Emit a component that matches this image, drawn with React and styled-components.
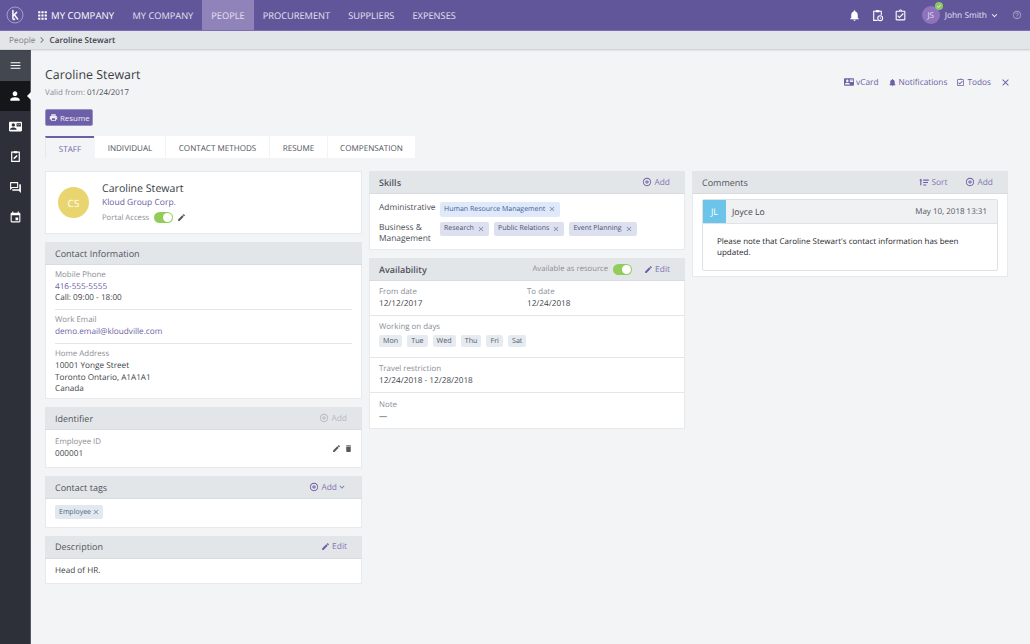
import React from "react";
import styled, { createGlobalStyle } from "styled-components";
import {
  MdApps, MdNotifications, MdOutlineAssignmentTurnedIn, MdKeyboardArrowDown, MdMenu, MdPerson,
  MdContactMail, MdOutlineForum, MdEvent, MdPrint, MdEdit, MdDelete, MdClose, MdAddCircleOutline,
  MdHelpOutline, MdChevronRight, MdCheck,
} from "react-icons/md";

const Global = createGlobalStyle`
  html, body { margin: 0; padding: 0; height: 100%; }
  body { font-family: "Open Sans", "Liberation Sans", sans-serif; background: #f3f4f6; color: #3c3f46; overflow: hidden; text-rendering: geometricPrecision; }
  * { box-sizing: border-box; }
`;
const Page = styled.div`width: 1030px; height: 644px; display: flex; flex-direction: column; overflow: hidden;`;
const Top = styled.header`height: 31px; flex: none; background: #62569b; border-bottom: 1px solid #7a6fb0; display: flex; align-items: stretch; color: #fff; font-size: 9.25px;`;
const Logo = styled.svg`width: 18px; height: 18px; margin: 6px 0 0 6px; flex: none;`;
const Brand = styled.div`display: flex; align-items: center; gap: 2px; margin-left: 12px; width: 87.5px; font-size: 9.6px; font-weight: 400; white-space: nowrap;`;
const NavItem = styled.div`display: flex; align-items: center; padding: 0 9px; white-space: nowrap; color: #e5e2f1;
  background: ${p => p.$active ? "#8f83ba" : "transparent"};`;
const TopRight = styled.div`margin-left: auto; display: flex; align-items: center; padding-right: 8px;`;
const TopIcon = styled.span`display: flex; margin-right: ${p => p.$mr}px; color: #fff; opacity: ${p => p.$dim ? 0.45 : 1};`;
const Avatar = styled.div`position: relative; width: 18px; height: 18px; border-radius: 50%; background: #8f74bd; color: #e6e0f2; font-size: 8px; display: flex; align-items: center; justify-content: center; margin-right: 5px;`;
const Check = styled.span`position: absolute; top: -4px; right: -3px; width: 8px; height: 8px; border-radius: 50%; background: #8dc764; color: #fff; display: flex; align-items: center; justify-content: center;`;
const UserName = styled.span`font-size: 8.4px; color: #e5e2f1; white-space: nowrap; margin-right: 2px;`;
const Crumbs = styled.nav`height: 19px; flex: none; background: #e3e6e9; border-bottom: 1px solid #d2d4d8; box-shadow: 0 1px 1px rgba(0,0,0,.06); display: flex; align-items: center; padding-left: 9px; font-size: 8.3px; color: #7e828a; position: relative; z-index: 2;`;
const CrumbSep = styled(MdChevronRight)`margin: 0 1px;`;
const CrumbCur = styled.span`color: #3f434b; font-weight: 600; font-size: 8.2px;`;
const Body = styled.div`flex: 1; display: flex; min-height: 0;`;
const Side = styled.aside`width: 31px; flex: none; background: #2d3039; border-right: 1px solid #55585f; color: #fff; display: flex; flex-direction: column;`;
const SideItem = styled.div`height: ${p => p.$h || 30.5}px; flex: none; display: flex; align-items: center; justify-content: center; position: relative;
  background: ${p => p.$active ? "#15161a" : p.$top ? "#434850" : "transparent"};
  ${p => p.$active && `&::after { content: ""; position: absolute; right: -1px; top: 50%; margin-top: -4px; border: 4px solid transparent; border-right-color: #fff; border-left: 0; }`}`;
const Main = styled.main`flex: 1; min-width: 0; padding: 0 22px 0 14px; display: flex; flex-direction: column;`;
const HeadRow = styled.div`display: flex; justify-content: space-between; height: 59px;`;
const Title = styled.h1`margin: 16px 0 0; font-size: 12.4px; font-weight: 400; line-height: 18px; color: #3a3d44;`;
const Valid = styled.div`font-size: 7.9px; line-height: 12px; margin-top: 3px; color: #8b8e95;`;
const ValidDate = styled.span`color: #4a4d54;`;
const HeadLinks = styled.div`display: flex; align-items: center; height: 12px; margin: 26px -3px 0 0; color: #6c60a6; font-size: 8.3px;`;
const HeadLink = styled.span`display: flex; align-items: center; gap: 2px; margin-right: ${p => p.$mr ?? 9}px; white-space: nowrap;`;
const ResumeBtn = styled.button`width: 48px; height: 17px; border: 1px solid #9a90c8; border-radius: 2px; background: #6d5ea8; color: #efedf6; font: 400 7.9px "Open Sans", sans-serif; display: flex; align-items: center; gap: 2px; padding: 0 0 0 3px;`;
const Tabs = styled.div`display: flex; gap: 1px; margin-top: 10px; height: 22px;`;
const Tab = styled.div`display: flex; align-items: center; justify-content: center; padding-top: 2px; width: ${p => p.$w}px; font-size: 8.1px; white-space: nowrap; color: ${p => p.$active ? "#7268a9" : "#4e5158"};
  background: ${p => p.$active ? "#f3f4f6" : "#fff"}; border-top: ${p => p.$active ? "2px solid #6d5ea8" : "0"};
  ${p => p.$active && "border-left: 1px solid #e6e8ec;"}`;
const Columns = styled.div`display: grid; grid-template-columns: 317px 316px 316px; gap: 7px; margin-top: 13px; align-items: start;`;
const Col = styled.div`display: flex; flex-direction: column; gap: 8px;`;
const Panel = styled.section`background: #fff; border: 1px solid #e7e9ec; border-top: 0;`;
const PanelHead = styled.div`height: 23px; margin: 0 -1px; background: #e3e6e9; border-bottom: 1px solid #d8dbdf; display: flex; align-items: center; padding: 0 15px 0 10px; font-size: 9px; color: #50535a; font-weight: ${p => p.$bold ? 600 : 400};`;
const HeadActions = styled.div`margin-left: auto; display: flex; align-items: center; gap: ${p => p.$gap || 18}px;`;
const Action = styled.span`display: inline-flex; align-items: center; gap: 2px; font-size: 8.4px; font-weight: 400; color: ${p => p.$muted ? "#b6b9bf" : "#8277b5"}; white-space: nowrap;`;
const ActionIcon = styled.span`display: flex; color: ${p => p.$muted ? "#b6b9bf" : "#6c5fa8"};`;
const ActionChevron = styled(MdKeyboardArrowDown)`margin-left: -2px;`;
const ProfileCard = styled.div`height: 63px; background: #fff; border: 1px solid #e7e9ec; display: flex; align-items: center; padding: 0 0 0 12px;`;
const CSAvatar = styled.div`width: 31px; height: 31px; border-radius: 50%; background: #e9d56f; color: #fff; font-size: 10px; display: flex; align-items: center; justify-content: center; flex: none; margin-right: 13px;`;
const ProfileName = styled.div`font-size: 10.6px; line-height: 14px; color: #3a3d44;`;
const Company = styled.div`font-size: 8.5px; line-height: 12px; margin-top: 1px; color: #6c60a6;`;
const Portal = styled.div`display: flex; align-items: center; gap: 4.5px; margin-top: 3px; font-size: 7.7px; color: #8b8e95; height: 12px;`;
const Switch = styled.span`width: 19px; height: 11px; border-radius: 6px; background: #93cc5b; position: relative; flex: none;
  &::after { content: ""; position: absolute; right: 1px; top: 1px; width: 9px; height: 9px; border-radius: 50%; background: #fff; }`;
const Section = styled.div`padding: ${p => p.$pad || "5px 10px 6px"}; border-bottom: ${p => p.$last ? "0" : "1px solid #e4e6e9"}; margin: ${p => p.$inset ? "0 9px" : "0"};`;
const TagSection = styled(Section)`display: flex;`;
const Label = styled.div`font-size: 7.9px; line-height: 12px; color: #8b8e95;`;
const CloseLabel = styled(Label)`line-height: 11px;`;
const Value = styled.div`font-size: 8.2px; line-height: 11.4px; color: #3c3f46;`;
const LinkValue = styled(Value)`color: #6c60a6;`;
const Row = styled.div`display: flex; align-items: flex-start; justify-content: space-between;`;
const RowIcons = styled.div`display: flex; gap: 3px; color: #55585f; margin-top: 7px;`;
const Tag = styled.span`display: inline-flex; align-items: center; gap: ${p => p.$plain ? 1 : 3}px; height: ${p => p.$h || 14.5}px; padding: 0 ${p => p.$plain ? 3 : 4}px 0 4px; border-radius: 2px; font-size: 7px; white-space: nowrap; color: ${p => p.$blue ? "#3f5f9c" : p.$plain ? "#4c6480" : "#4f5372"}; background: ${p => p.$blue ? "#dfe9f9" : p.$plain ? "#e2e8f0" : "#dde1ef"};`;
const TagX = styled(MdClose)`color: #7e83a0;`;
const SkillGrid = styled.div`display: grid; grid-template-columns: 61px 1fr; row-gap: 5px; padding: 8px 9px 0; height: 55px; align-content: start;`;
const SkillName = styled.div`font-size: 8.4px; line-height: 11px; color: #4b4e55;`;
const TagLine = styled.div`display: flex; gap: 5px;`;
const Dates = styled.div`display: grid; grid-template-columns: 148px 1fr;`;
const DayTag = styled.span`display: inline-flex; align-items: center; height: 12px; padding: 0 4px; border-radius: 2px; background: #e6ebf1; color: #555a66; font-size: 7.2px; line-height: 12px;`;
const Days = styled.div`display: flex; gap: 5px; margin-top: 2px; margin-bottom: 9.5px;`;
const AvailLabel = styled.span`font-size: 7.7px; color: #8b8e95; margin-right: 3px; font-weight: 400;`;
const CommentWrap = styled.div`padding: 5px 9px 5px;`;
const Comment = styled.div`border: 1px solid #dfe1e5; border-radius: 2px;`;
const CommentHead = styled.div`height: 24px; background: #f0f1f3; border-bottom: 1px solid #e0e2e6; display: flex; align-items: center; font-size: 8.6px; color: #44474e;`;
const JL = styled.div`width: 23px; height: 23px; background: #6cc4e8; color: #fff; font-size: 9px; display: flex; align-items: center; justify-content: center; margin-right: 6px;`;
const CommentDate = styled.span`margin-left: auto; margin-right: 10px; font-size: 8px; color: #55585f;`;
const CommentText = styled.div`padding: 12px 14px 11px 14px; font-size: 8px; line-height: 11px; color: #26282c; height: 46px;`;

const KLogo = () => (
  <Logo viewBox="0 0 18 18" fill="none">
    <circle cx="9" cy="9" r="8" stroke="#b5aed4" strokeWidth="0.8" />
    <path d="M6.9 4.6v7.6c0 1 .8 1.4 1.6 1M7.4 9.6l3.2-3.2M8.6 9l3 4" stroke="#f4f2fa" strokeWidth="1.6" strokeLinecap="round" />
  </Logo>
);
const ClipPen = ({ size = 14 }) => (
  <svg width={size} height={size} viewBox="0 0 24 24" fill="none" stroke="currentColor">
    <path d="M9 4H5v17h14V4h-4" strokeWidth="2.2" />
    <rect x="8.5" y="2" width="7" height="4" fill="currentColor" strokeWidth="0" />
    <path d="M8 17l1-3 5-5 2 2-5 5z" fill="currentColor" strokeWidth="0" />
  </svg>
);
const ClipClock = ({ size = 14 }) => (
  <svg width={size} height={size} viewBox="0 0 24 24" fill="none" stroke="currentColor" strokeWidth="2">
    <path d="M9 4H5v17h7M15 4h4v7" />
    <rect x="8.5" y="2" width="7" height="4" fill="currentColor" strokeWidth="0" />
    <circle cx="17" cy="17" r="4.5" />
    <path d="M17 15v2.2l1.6 1" strokeWidth="1.3" />
  </svg>
);
const SortIcon = () => (
  <svg width="10" height="8" viewBox="0 0 12 10" fill="#6c5fa8">
    <path d="M2 1l2 2.2H2.7V9H1.3V3.2H0zM5 2h7v1.3H5zM5 5h6v1.3H5zM5 8h4v1.3H5z" />
  </svg>
);
const Add = ({ muted, chevron }) => (
  <Action $muted={muted}>
    <ActionIcon $muted={muted}><MdAddCircleOutline size={10} /></ActionIcon>Add
    {chevron && <ActionChevron size={10} />}
  </Action>
);
const Edit = () => (
  <Action><ActionIcon><MdEdit size={9} /></ActionIcon>Edit</Action>
);

const navs = ["MY COMPANY", "PEOPLE", "PROCUREMENT", "SUPPLIERS", "EXPENSES"];
const tabs = [["STAFF", 49], ["INDIVIDUAL", 70], ["CONTACT METHODS", 103], ["RESUME", 57], ["COMPENSATION", 87]];
const days = ["Mon", "Tue", "Wed", "Thu", "Fri", "Sat"];

export default function App() {
  return (
    <Page>
      <Global />
      <Top>
        <KLogo />
        <Brand><MdApps size={13} />MY COMPANY</Brand>
        {navs.map(n => (
          <NavItem key={n} $active={n === "PEOPLE"}>{n}</NavItem>
        ))}
        <TopRight>
          <TopIcon $mr={10}><MdNotifications size={13} /></TopIcon>
          <TopIcon $mr={10}><ClipClock size={13} /></TopIcon>
          <TopIcon $mr={15}><MdOutlineAssignmentTurnedIn size={13} /></TopIcon>
          <Avatar>JS<Check><MdCheck size={6} /></Check></Avatar>
          <UserName>John Smith</UserName>
          <TopIcon $mr={12}><MdKeyboardArrowDown size={11} /></TopIcon>
          <TopIcon $mr={0} $dim><MdHelpOutline size={10} /></TopIcon>
        </TopRight>
      </Top>
      <Crumbs>People<CrumbSep size={12} /><CrumbCur>Caroline Stewart</CrumbCur></Crumbs>
      <Body>
        <Side>
          <SideItem $top><MdMenu size={13} /></SideItem>
          <SideItem $active><MdPerson size={14} /></SideItem>
          <SideItem><MdContactMail size={13} /></SideItem>
          <SideItem><ClipPen size={13} /></SideItem>
          <SideItem><MdOutlineForum size={13} /></SideItem>
          <SideItem><MdEvent size={13} /></SideItem>
        </Side>
        <Main>
          <HeadRow>
            <div>
              <Title>Caroline Stewart</Title>
              <Valid>Valid from: <ValidDate>01/24/2017</ValidDate></Valid>
            </div>
            <HeadLinks>
              <HeadLink><MdContactMail size={10} />vCard</HeadLink>
              <HeadLink><MdNotifications size={9} />Notifications</HeadLink>
              <HeadLink><MdOutlineAssignmentTurnedIn size={9} />Todos</HeadLink>
              <HeadLink $mr={0}><MdClose size={11} /></HeadLink>
            </HeadLinks>
          </HeadRow>
          <div><ResumeBtn><MdPrint size={9} />Resume</ResumeBtn></div>
          <Tabs>
            {tabs.map(([t, w], i) => <Tab key={t} $w={w} $active={i === 0}>{t}</Tab>)}
          </Tabs>
          <Columns>
            <Col>
              <ProfileCard>
                <CSAvatar>CS</CSAvatar>
                <div>
                  <ProfileName>Caroline Stewart</ProfileName>
                  <Company>Kloud Group Corp.</Company>
                  <Portal>Portal Access <Switch /><MdEdit size={9} color="#55585f" /></Portal>
                </div>
              </ProfileCard>
              <Panel>
                <PanelHead>Contact Information</PanelHead>
                <Section $inset $pad="4px 0 5px">
                  <Label>Mobile Phone</Label>
                  <LinkValue>416-555-5555</LinkValue>
                  <Value>Call: 09:00 - 18:00</Value>
                </Section>
                <Section $inset $pad="4px 0 6px">
                  <Label>Work Email</Label>
                  <LinkValue>demo.email@kloudville.com</LinkValue>
                </Section>
                <Section $inset $last $pad="5px 0 4px">
                  <CloseLabel>Home Address</CloseLabel>
                  <Value>10001 Yonge Street</Value>
                  <Value>Toronto Ontario, A1A1A1</Value>
                  <Value>Canada</Value>
                </Section>
              </Panel>
              <Panel>
                <PanelHead>Identifier<HeadActions><Add muted /></HeadActions></PanelHead>
                <Section $last $pad="7px 8px 7.5px 9px">
                  <Row>
                    <div>
                      <CloseLabel>Employee ID</CloseLabel>
                      <Value>000001</Value>
                    </div>
                    <RowIcons><MdEdit size={9} /><MdDelete size={9} /></RowIcons>
                  </Row>
                </Section>
              </Panel>
              <Panel>
                <PanelHead>Contact tags<HeadActions><Add chevron /></HeadActions></PanelHead>
                <TagSection $last $pad="6px 9px 7.5px"><Tag $plain $h={14}>Employee <TagX size={8} /></Tag></TagSection>
              </Panel>
              <Panel>
                <PanelHead>Description<HeadActions><Edit /></HeadActions></PanelHead>
                <Section $last $pad="6px 9px 7px"><Value>Head of HR.</Value></Section>
              </Panel>
            </Col>
            <Col>
              <Panel>
                <PanelHead $bold>Skills<HeadActions><Add /></HeadActions></PanelHead>
                <SkillGrid>
                  <SkillName>Administrative</SkillName>
                  <TagLine><Tag $blue>Human Resource Management <TagX size={8} /></Tag></TagLine>
                  <SkillName>Business &amp; Management</SkillName>
                  <TagLine>
                    <Tag>Research <TagX size={8} /></Tag>
                    <Tag>Public Relations <TagX size={8} /></Tag>
                    <Tag>Event Planning <TagX size={8} /></Tag>
                  </TagLine>
                </SkillGrid>
              </Panel>
              <Panel>
                <PanelHead $bold>Availability<HeadActions $gap={12}><Action><AvailLabel>Available as resource</AvailLabel><Switch /></Action><Edit /></HeadActions></PanelHead>
                <Section $pad="6px 9px 6px">
                  <Dates>
                    <div><CloseLabel>From date</CloseLabel><Value>12/12/2017</Value></div>
                    <div><CloseLabel>To date</CloseLabel><Value>12/24/2018</Value></div>
                  </Dates>
                </Section>
                <Section $pad="6px 9px 0">
                  <CloseLabel>Working on days</CloseLabel>
                  <Days>{days.map(d => <DayTag key={d}>{d}</DayTag>)}</Days>
                </Section>
                <Section $pad="6px 9px 6px">
                  <CloseLabel>Travel restriction</CloseLabel>
                  <Value>12/24/2018 - 12/28/2018</Value>
                </Section>
                <Section $last $pad="7px 9px 5px">
                  <CloseLabel>Note</CloseLabel>
                  <Value>—</Value>
                </Section>
              </Panel>
            </Col>
            <Col>
              <Panel>
                <PanelHead>Comments
                  <HeadActions>
                    <Action><SortIcon />Sort</Action>
                    <Add />
                  </HeadActions>
                </PanelHead>
                <CommentWrap>
                  <Comment>
                    <CommentHead><JL>JL</JL>Joyce Lo<CommentDate>May 10, 2018 13:31</CommentDate></CommentHead>
                    <CommentText>Please note that Caroline Stewart's contact information has been updated.</CommentText>
                  </Comment>
                </CommentWrap>
              </Panel>
            </Col>
          </Columns>
        </Main>
      </Body>
    </Page>
  );
}
